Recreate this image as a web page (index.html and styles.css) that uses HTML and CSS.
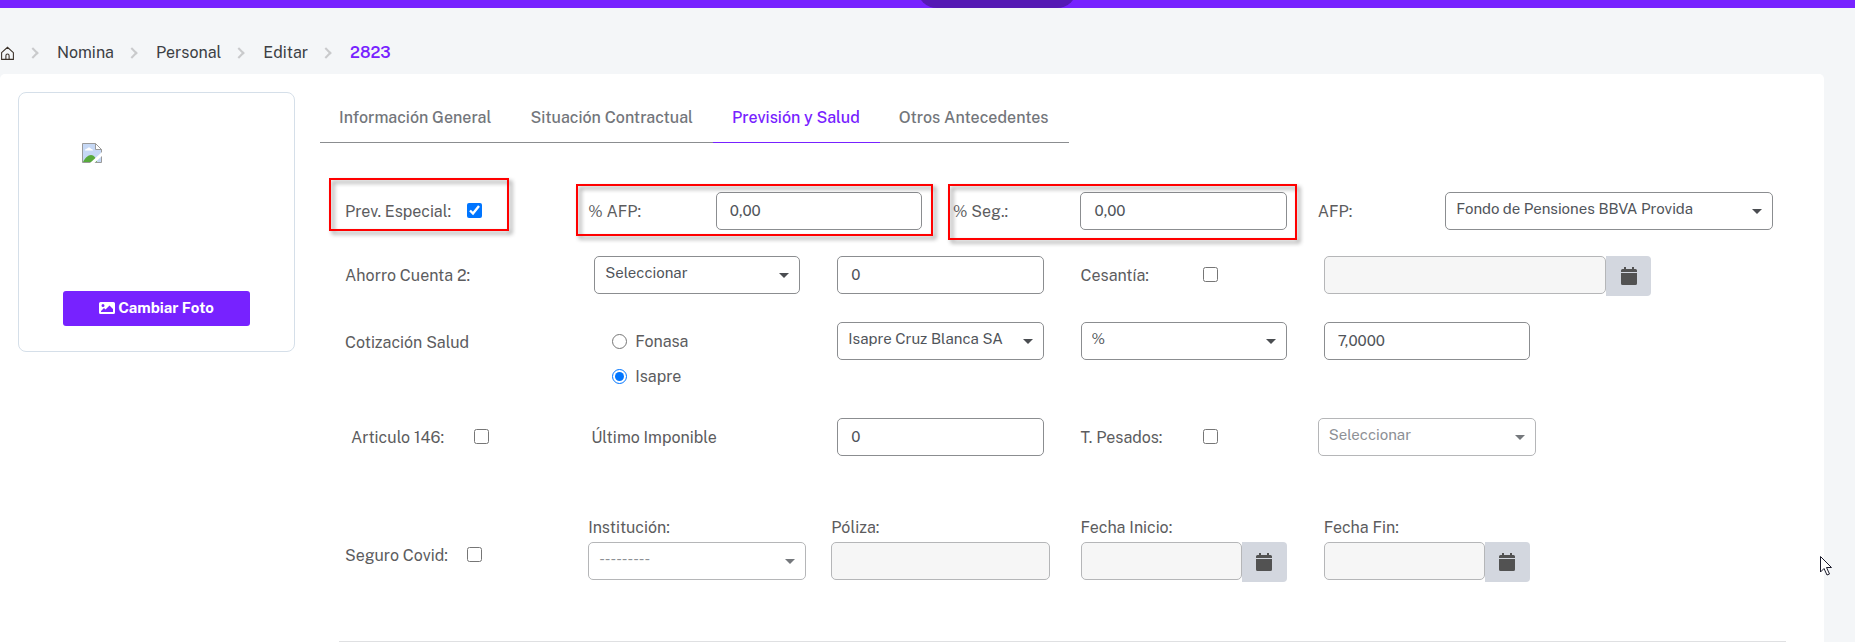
FILE: index.html
```
<!DOCTYPE html>
<html lang="es">
	<head>
		<meta charset="utf-8">
		<meta name="viewport" content="width=device-width, initial-scale=1">
		<title>Editar Personal</title>
		<link rel="stylesheet" href="styles.css">
	</head>
	<body>
		<header class="topbar"><span class="topbar-pill"></span></header>
		<nav class="breadcrumb" aria-label="breadcrumb">
			<a href="#" aria-label="Inicio">
				<svg class="home-icon" viewBox="0 0 14 14"><path d="M1.5 6.2 7 1.2l5.5 5v6.3h-11zM5.5 12.5V9a1.5 1.5 0 0 1 3 0v3.5"/></svg>
			</a>
			<a href="#">Nomina</a>
			<a href="#">Personal</a>
			<a href="#">Editar</a>
			<a href="#" class="current">2823</a>
		</nav>
		<main class="panel">
			<aside class="photo-card">
				<svg class="photo" viewBox="0 0 20 20">
					<path d="M.5.5h13l6 6v13H.5z" fill="#c6d8f5" stroke="#9a9a9a"/>
					<path d="M3 7.5c0-1.500 1.500-2 2-1.500.5-2 3.500-2 4 0 1.500 0 2 .5 2 1.500z" fill="#fff"/>
					<path d="M1 19c2-4 5-7 8-7s5 3 6 7z" fill="#58aa3c"/>
					<path d="M13.500.5v6h6z" fill="#fff" stroke="#9a9a9a"/>
					<path d="M8 20l12-11v4l-7.500 7z" fill="#fff"/>
				</svg>
				<button type="button" class="btn-photo">
					<svg class="image-icon" viewBox="0 0 16 12"><path fill-rule="evenodd" d="M1.500 0h13A1.500 1.500 0 0 1 16 1.500v9a1.500 1.500 0 0 1-1.500 1.500h-13A1.500 1.500 0 0 1 0 10.500v-9A1.500 1.500 0 0 1 1.500 0zM2 10h12V7l-3.500-3.500L6.500 7.500 5 6 2 9zM4 2a1.500 1.500 0 1 0 0 3 1.500 1.500 0 0 0 0-3z"/></svg>
					Cambiar Foto
				</button>
			</aside>
			<section class="content">
				<nav class="tabs">
					<a href="#" class="tab">Información General</a>
					<a href="#" class="tab">Situación Contractual</a>
					<a href="#" class="tab active">Previsión y Salud</a>
					<a href="#" class="tab">Otros Antecedentes</a>
				</nav>
				<form class="form">
					<div class="row row-prev">
						<div class="group span-2">
							<label for="prev-especial">Prev. Especial:</label>
							<input type="checkbox" id="prev-especial" checked>
							<span class="mark mark-prev"></span>
						</div>
						<div class="group span-3">
							<label for="pct-afp">% AFP:</label>
							<div class="field"><input type="text" id="pct-afp" class="control" value="0,00"></div>
							<span class="mark mark-afp"></span>
						</div>
						<div class="group span-3">
							<label for="pct-seg">% Seg.:</label>
							<div class="field"><input type="text" id="pct-seg" class="control" value="0,00"></div>
							<span class="mark mark-seg"></span>
						</div>
						<div class="group group-wide span-4">
							<label for="afp">AFP:</label>
							<div class="field"><div class="select"><select id="afp" class="control"><option>Fondo de Pensiones BBVA Provida</option></select></div></div>
						</div>
					</div>

					<div class="row row-ahorro">
						<label class="span-2" for="ahorro">Ahorro Cuenta 2:</label>
						<div class="field span-2"><div class="select"><select id="ahorro" class="control"><option>Seleccionar</option></select></div></div>
						<div class="field span-2"><input type="text" class="control" value="0" aria-label="Monto ahorro"></div>
						<div class="group indent span-2">
							<label for="cesantia">Cesantía:</label>
							<input type="checkbox" id="cesantia">
						</div>
						<div class="field span-3">
							<div class="date">
								<input type="text" class="control" disabled aria-label="Fecha cesantía">
								<button type="button" class="date-btn" aria-label="Calendario"><svg viewBox="0 0 16 18"><path d="M0 5V3.500A1.500 1.500 0 0 1 1.500 2H3V0h2v2h6V0h2v2h1.500A1.500 1.500 0 0 1 16 3.500V5zM0 6h16v10.500a1.500 1.500 0 0 1-1.500 1.500h-13A1.500 1.500 0 0 1 0 16.500z"/></svg></button>
							</div>
						</div>
					</div>

					<div class="row row-salud">
						<span class="span-2">Cotización Salud</span>
						<div class="radios span-2">
							<label><input type="radio" name="salud"> Fonasa</label>
							<label><input type="radio" name="salud" checked> Isapre</label>
						</div>
						<div class="field span-2"><div class="select"><select class="control" aria-label="Isapre"><option>Isapre Cruz Blanca SA</option></select></div></div>
						<div class="field span-2"><div class="select"><select class="control" aria-label="Unidad"><option>%</option></select></div></div>
						<div class="field span-2"><input type="text" class="control" value="7,0000" aria-label="Cotización"></div>
					</div>

					<div class="row row-articulo">
						<div class="group indent span-2">
							<label for="articulo">Articulo 146:</label>
							<input type="checkbox" id="articulo">
						</div>
						<label class="span-2" for="imponible">Último Imponible</label>
						<div class="field span-2"><input type="text" id="imponible" class="control" value="0"></div>
						<div class="group indent span-2">
							<label for="pesados">T. Pesados:</label>
							<input type="checkbox" id="pesados">
						</div>
						<div class="field field-wide span-2"><div class="select"><select class="control" disabled aria-label="Trabajo pesado"><option>Seleccionar</option></select></div></div>
					</div>

					<div class="row row-covid">
						<div class="group span-2">
							<label for="covid">Seguro Covid:</label>
							<input type="checkbox" id="covid">
						</div>
						<div class="field field-wide stack span-2">
							<label for="institucion">Institución:</label>
							<div class="select"><select id="institucion" class="control" disabled><option>---------</option></select></div>
						</div>
						<div class="field field-wide stack span-2">
							<label for="poliza">Póliza:</label>
							<input type="text" id="poliza" class="control" disabled>
						</div>
						<div class="field stack span-2">
							<label for="inicio">Fecha Inicio:</label>
							<div class="date">
								<input type="text" id="inicio" class="control" disabled>
								<button type="button" class="date-btn" aria-label="Calendario"><svg viewBox="0 0 16 18"><path d="M0 5V3.500A1.500 1.500 0 0 1 1.500 2H3V0h2v2h6V0h2v2h1.500A1.500 1.500 0 0 1 16 3.500V5zM0 6h16v10.500a1.500 1.500 0 0 1-1.500 1.500h-13A1.500 1.500 0 0 1 0 16.500z"/></svg></button>
							</div>
						</div>
						<div class="field stack span-2">
							<label for="fin">Fecha Fin:</label>
							<div class="date">
								<input type="text" id="fin" class="control" disabled>
								<button type="button" class="date-btn" aria-label="Calendario"><svg viewBox="0 0 16 18"><path d="M0 5V3.500A1.500 1.500 0 0 1 1.500 2H3V0h2v2h6V0h2v2h1.500A1.500 1.500 0 0 1 16 3.500V5zM0 6h16v10.500a1.500 1.500 0 0 1-1.500 1.500h-13A1.500 1.500 0 0 1 0 16.500z"/></svg></button>
							</div>
						</div>
					</div>
				</form>
				<hr class="divider">
			</section>
		</main>
		<svg class="cursor" viewBox="0 0 13 20"><path d="M.5.5v15.500l3.500-3.500 3 6.500 2.500-1-3-6.500h5z"/></svg>
	</body>
</html>
```

FILE: styles.css
```
* {
	box-sizing: border-box;
}

body {
	margin: 0;
	min-height: 100vh;
	display: flex;
	flex-direction: column;
	position: relative;
	background: #f4f6f8;
	color: #5c5c5e;
	font-family: "Public Sans", Inter, sans-serif;
	font-size: 16px;
	line-height: 24px;
}

a {
	color: inherit;
	text-decoration: none;
}

.topbar {
	position: relative;
	height: 8px;
	background: #7722ff;
	overflow: hidden;
}

.topbar-pill {
	position: absolute;
	left: 50%;
	bottom: 0;
	width: 160px;
	height: 40px;
	margin-left: -11px;
	border-radius: 20px;
	background: #5519b4;
}

.breadcrumb {
	display: flex;
	align-items: center;
	height: 66px;
	padding-top: 33px;
	padding-bottom: 9px;
	color: #3c3f44;
}

.breadcrumb a {
	display: flex;
	align-items: center;
}

.breadcrumb a + a::before {
	content: "";
	width: 6px;
	height: 6px;
	margin-left: 14px;
	margin-right: 20px;
	border: solid #c9cacc;
	border-width: 2px 2px 0 0;
	transform: rotate(45deg);
}

.breadcrumb .current {
	color: #7722ff;
	font-weight: 600;
}

.home-icon {
	width: 15px;
	height: 15px;
	fill: none;
	stroke: #3a3028;
}

.panel {
	flex: 1;
	display: flex;
	align-items: flex-start;
	margin-right: 31px;
	padding: 18px 20px 0 18px;
	background: #fff;
	border-radius: 5px 5px 0 0;
}

.photo-card {
	flex: none;
	display: flex;
	flex-direction: column;
	width: 277px;
	height: 260px;
	padding: 50px 44px 25px;
	border: 1px solid #d5dfe9;
	border-radius: 8px;
}

.photo {
	width: 20px;
	height: 20px;
	margin-left: 19px;
}

.btn-photo {
	display: flex;
	align-items: center;
	justify-content: center;
	gap: 3px;
	height: 35px;
	margin-top: auto;
	padding: 0 0 2px;
	border: 0;
	border-radius: 3px;
	background: #7722ff;
	color: #fff;
	font: 700 15px/20px "Public Sans", Inter, sans-serif;
}

.image-icon {
	width: 16px;
	height: 12px;
	fill: #fff;
}

.content {
	flex: 1;
	min-width: 0;
	margin-left: 25px;
}

.tabs {
	display: flex;
	width: max-content;
	padding-top: 12px;
}

.tab {
	padding: 2px 20px 12px 19px;
	border-bottom: 1px solid #8b8d90;
	color: #73767b;
	font-weight: 500;
}

.tab.active {
	border-color: #7722ff;
	color: #7722ff;
}

.form {
	padding-top: 49px;
	padding-left: 25px;
}

.row {
	display: grid;
	grid-template-columns: repeat(12, 1fr);
	align-items: center;
}

.span-2 {
	grid-column: span 2;
}

.span-3 {
	grid-column: span 3;
}

.span-4 {
	grid-column: span 4;
}

.row-prev {
	margin-bottom: 26px;
}

.row-ahorro {
	margin-bottom: 28px;
}

.row-salud {
	align-items: start;
	margin-bottom: 24px;
}

.row-salud > span {
	line-height: 42px;
}

.row-articulo {
	margin-bottom: 60px;
}

.row-covid {
	margin-bottom: 61px;
}

.row > label,
.group > label {
	padding-top: 2px;
}

.row-articulo > label {
	padding-left: 3px;
}

.group {
	position: relative;
	display: grid;
	grid-template-columns: 1fr 1fr;
	align-items: center;
}

.group.span-3 {
	grid-template-columns: 1fr 2fr;
}

.group-wide {
	grid-template-columns: 1fr 3fr;
}

.group > input {
	margin-bottom: 2px;
}

.indent {
	padding-left: 6px;
}

.indent > input {
	margin-left: 4px;
}

.row-covid > .group {
	padding-top: 14px;
}

.field {
	min-width: 0;
	padding-left: 6px;
	padding-right: 31px;
}

.field-wide {
	padding-left: 0;
	padding-right: 25px;
}

.stack > label {
	display: block;
	margin-bottom: 2px;
}

.control {
	display: block;
	width: 100%;
	height: 38px;
	padding: 0 13px 1px;
	border: 1px solid #8b8d90;
	border-radius: 5px;
	background: #fff;
	color: #50545a;
	font-family: inherit;
	font-size: 15px;
	line-height: 20px;
}

select.control {
	appearance: none;
	padding: 0 30px 5px 10px;
	opacity: 1;
}

.control:disabled {
	border-color: #b5b6b8;
	background: #f6f6f6;
}

select.control:disabled {
	background: #fff;
	color: #8d9095;
}

.select {
	position: relative;
}

.select::after {
	content: "";
	position: absolute;
	right: 11px;
	top: 17px;
	border: 5px solid transparent;
	border-top-color: #4a4d51;
	border-bottom: 0;
	pointer-events: none;
}

.select:has(:disabled)::after {
	border-top-color: #75787c;
}

.date {
	display: flex;
	align-items: flex-start;
	height: 38px;
}

.date .control {
	flex: 1;
	min-width: 0;
}

.date-btn {
	display: flex;
	align-items: center;
	justify-content: center;
	width: 45px;
	height: 40px;
	padding: 0;
	border: 0;
	border-radius: 0 4px 4px 0;
	background: #d3d7df;
}

.date-btn svg {
	width: 16px;
	height: 18px;
	fill: #525252;
}

input[type="checkbox"],
input[type="radio"] {
	width: 15px;
	height: 15px;
	margin-top: 0;
	margin-right: 0;
	accent-color: #0075ff;
}

.group > input[type="checkbox"] {
	margin-bottom: 2px;
	margin-left: 0;
}

.indent > input[type="checkbox"] {
	margin-left: 4px;
}

.radios {
	padding-top: 2px;
}

.radios label {
	display: flex;
	align-items: center;
	gap: 8px;
	height: 35px;
	padding-left: 24px;
}

.radios input {
	margin: 0;
}

.divider {
	height: 1px;
	margin: 0 18px 0 19px;
	border: 0;
	background: #dfe0e2;
}

/* highlight boxes */
.mark {
	position: absolute;
	top: -8px;
	bottom: -6px;
	border: 2px solid #f00;
	filter: drop-shadow(3px 3px 2px rgba(0, 0, 0, 0.45));
	pointer-events: none;
}

.mark-prev {
	left: -16px;
	top: -20px;
	width: 180px;
	bottom: -7px;
}

.mark-afp {
	left: -12px;
	right: 20px;
}

.mark-seg {
	left: -5px;
	right: 21px;
	bottom: -10px;
}

.cursor {
	position: absolute;
	right: 22px;
	top: 556px;
	width: 13px;
	height: 20px;
	fill: #fff;
	stroke: #1b1b2b;
}
```
